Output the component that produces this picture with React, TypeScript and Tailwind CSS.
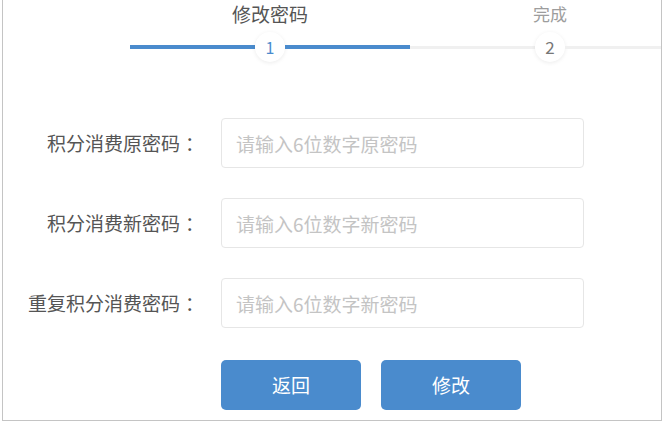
const font = { fontFamily: '"Noto Sans CJK SC", "Noto Sans", sans-serif' };

type Step = { title: string; num: number; active: boolean };

const steps: Step[] = [
  { title: "修改密码", num: 1, active: true },
  { title: "完成", num: 2, active: false },
];

const fields = [
  { label: "积分消费原密码", placeholder: "请输入6位数字原密码" },
  { label: "积分消费新密码", placeholder: "请输入6位数字新密码" },
  { label: "重复积分消费密码", placeholder: "请输入6位数字新密码" },
];

export default function App() {
  return (
    <div className="w-[664px] h-[425px] bg-white overflow-hidden" style={font}>
      <div className="ml-[2px] w-[660px] h-[421px] border-l border-r border-b border-[#c4c4c4] overflow-hidden">
        {/* steps */}
        <div className="flex pl-[127px]">
          {steps.map((s) => (
            <div key={s.num} className="w-[280px] shrink-0 flex flex-col items-center">
              <div
                className={
                  s.active
                    ? "h-[28px] leading-[28px] text-[19px] text-[#555]"
                    : "h-[28px] leading-[28px] text-[17px] text-[#9d9d9d]"
                }
              >
                {s.title}
              </div>
              <div className="mt-[4px] w-full flex items-center h-[30px]">
                <div className={s.active ? "flex-1 h-[4px] bg-[#4a8bcd]" : "flex-1 h-[3px] bg-[#f0f0f0]"} />
                <div
                  className={
                    s.active
                      ? "w-[30px] h-[30px] rounded-full bg-white shadow-[0_1px_4px_rgba(0,0,0,0.08)] flex items-center justify-center text-[16px] text-[#4a8bcd]"
                      : "w-[30px] h-[30px] rounded-full bg-white shadow-[0_1px_4px_rgba(0,0,0,0.08)] flex items-center justify-center text-[17px] text-[#777]"
                  }
                >
                  {s.num}
                </div>
                <div className={s.active ? "flex-1 h-[4px] bg-[#4a8bcd]" : "flex-1 h-[3px] bg-[#f0f0f0]"} />
              </div>
            </div>
          ))}
        </div>

        {/* form */}
        <div className="mt-[56px] flex flex-col gap-[30px]">
          {fields.map((f) => (
            <div key={f.label} className="flex items-center">
              <div className="w-[201px] text-right text-[19px] text-[#555] whitespace-nowrap">
                {f.label}
                <span className="ml-[5px]">：</span>
              </div>
              <input
                type="password"
                placeholder={f.placeholder}
                className="ml-[17px] w-[363px] h-[50px] border border-[#e6e6e6] rounded-[4px] pl-[14px] text-[19px] text-[#555] placeholder:text-[#c4c4c4] outline-none"
                style={font}
              />
            </div>
          ))}
          <div className="flex pl-[218px] gap-[20px] mt-[2px]">
            <button className="w-[140px] h-[50px] rounded-[5px] bg-[#4a8bcd] text-white text-[19px]">返回</button>
            <button className="w-[140px] h-[50px] rounded-[5px] bg-[#4a8bcd] text-white text-[19px]">修改</button>
          </div>
        </div>
      </div>
    </div>
  );
}
